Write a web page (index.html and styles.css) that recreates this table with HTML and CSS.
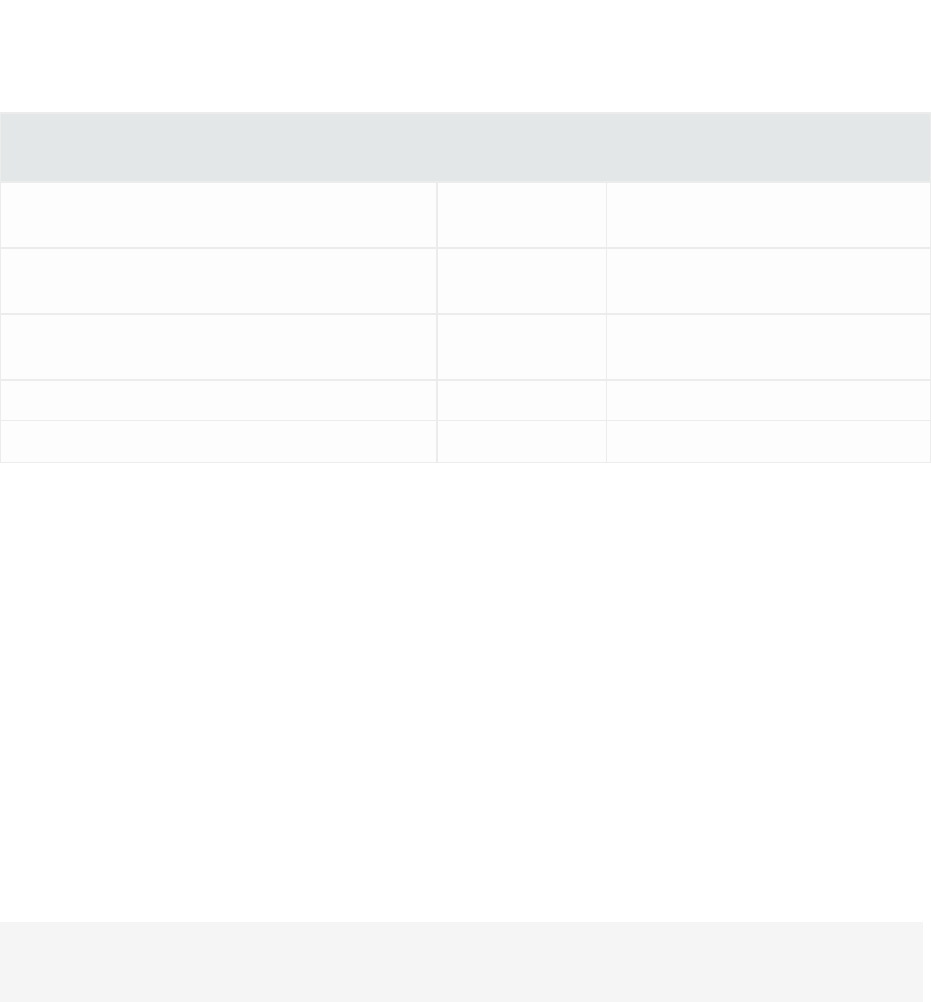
FILE: index.html
```html
<!DOCTYPE html>
<html lang="en">
<head>
<meta charset="utf-8">
<title>Table</title>
<link rel="stylesheet" href="styles.css">
</head>
<body>
<main class="page">
  <div class="table">
    <div class="head"></div>
    <div class="row">
      <div class="cell c1"></div><div class="cell c2"></div><div class="cell c3"></div>
    </div>
    <div class="row">
      <div class="cell c1"></div><div class="cell c2"></div><div class="cell c3"></div>
    </div>
    <div class="row">
      <div class="cell c1"></div><div class="cell c2"></div><div class="cell c3"></div>
    </div>
    <div class="row thin short">
      <div class="cell c1"></div><div class="cell c2"></div><div class="cell c3"></div>
    </div>
    <div class="row thin last">
      <div class="cell c1"></div><div class="cell c2"></div><div class="cell c3"></div>
    </div>
  </div>
  <div class="code"></div>
</main>
</body>
</html>
```

FILE: styles.css
```css
html, body {
  margin: 0;
  padding: 0;
  background: #ffffff;
  font-family: "Open Sans", "Liberation Sans", sans-serif;
}
.page {
  padding-top: 112px;
}
.table {
  box-sizing: border-box;
  width: 931px;
  border-top: 2px solid #ececec;
  border-left: 1px solid #ececec;
  border-right: 1px solid #ececec;
}
.head {
  height: 67px;
  background: #e3e7e7;
  border-bottom: 2px solid #ececec;
}
.row {
  display: flex;
  height: 64px;
  border-bottom: 2px solid #ececec;
}
.row.thin {
  border-bottom-width: 1px;
}
.row.short {
  height: 39px;
}
.row.last {
  height: 41px;
}
.cell {
  background: #fdfdfd;
}
.c1 {
  width: 435px;
  border-right: 2px solid #ececec;
}
.c2 {
  width: 168px;
  border-right: 1px solid #ececec;
}
.c3 {
  flex: 1;
}
.code {
  margin-top: 459px;
  width: 923px;
  height: 90px;
  background: #f5f5f5;
}
```
